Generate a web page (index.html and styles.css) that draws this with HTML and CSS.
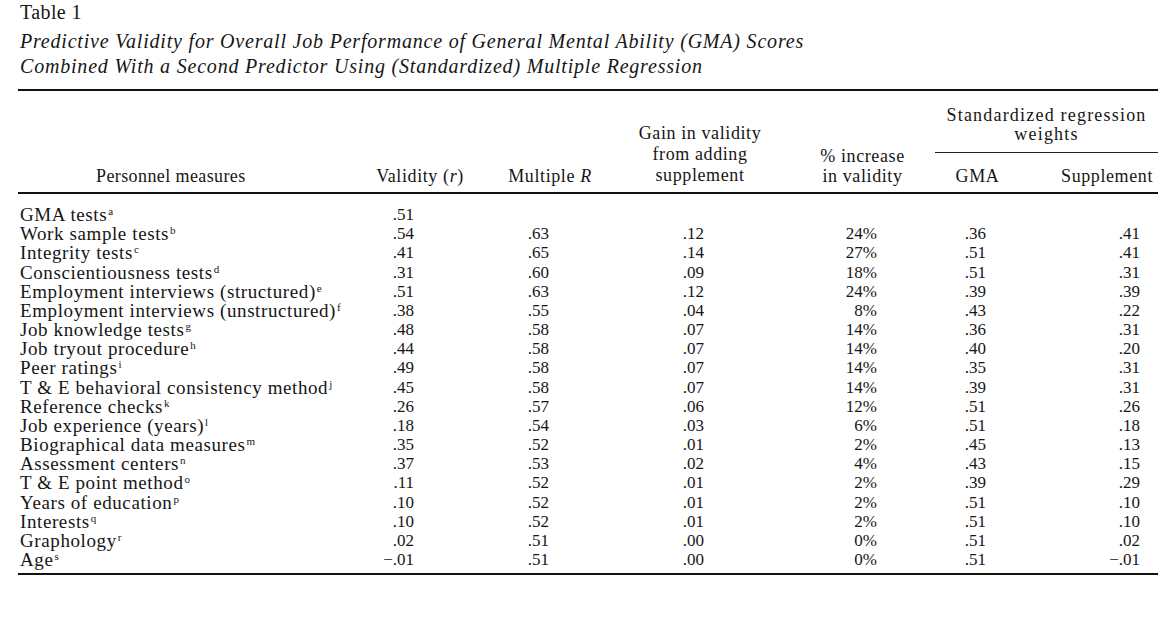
FILE: index.html
```html
<!DOCTYPE html>
<html lang="en">
<head>
<meta charset="utf-8">
<title>Table 1</title>
<link rel="stylesheet" href="styles.css">
</head>
<body>
<div class="page">
  <div class="caption">
    <div class="label">Table 1</div>
    <div class="title first">Predictive Validity for Overall Job Performance of General Mental Ability (GMA) Scores</div>
    <div class="title">Combined With a Second Predictor Using (Standardized) Multiple Regression</div>
  </div>
  <table class="data">
    <colgroup>
      <col class="c-name">
      <col class="c-val">
      <col class="c-mult">
      <col class="c-gain">
      <col class="c-pct">
      <col class="c-gma">
      <col class="c-sup">
    </colgroup>
    <thead>
      <tr class="h1">
        <th rowspan="2" class="h-name">Personnel measures</th>
        <th rowspan="2" class="h-low">Validity (<i>r</i>)</th>
        <th rowspan="2" class="h-low">Multiple <i>R</i></th>
        <th rowspan="2" class="h-low h-gain">Gain in validity<br>from adding<br>supplement</th>
        <th rowspan="2" class="h-low">% increase<br>in validity</th>
        <th colspan="2" class="h-span">Standardized regression<br>weights</th>
      </tr>
      <tr class="h2">
        <th class="h-gma">GMA</th>
        <th class="h-sup">Supplement</th>
      </tr>
    </thead>
    <tbody>
      <tr><td class="name">GMA tests<sup>a</sup></td><td>.51</td><td></td><td></td><td></td><td></td><td></td></tr>
      <tr><td class="name">Work sample tests<sup>b</sup></td><td>.54</td><td>.63</td><td>.12</td><td>24%</td><td>.36</td><td>.41</td></tr>
      <tr><td class="name">Integrity tests<sup>c</sup></td><td>.41</td><td>.65</td><td>.14</td><td>27%</td><td>.51</td><td>.41</td></tr>
      <tr><td class="name">Conscientiousness tests<sup>d</sup></td><td>.31</td><td>.60</td><td>.09</td><td>18%</td><td>.51</td><td>.31</td></tr>
      <tr><td class="name">Employment interviews (structured)<sup>e</sup></td><td>.51</td><td>.63</td><td>.12</td><td>24%</td><td>.39</td><td>.39</td></tr>
      <tr><td class="name">Employment interviews (unstructured)<sup>f</sup></td><td>.38</td><td>.55</td><td>.04</td><td>8%</td><td>.43</td><td>.22</td></tr>
      <tr><td class="name">Job knowledge tests<sup>g</sup></td><td>.48</td><td>.58</td><td>.07</td><td>14%</td><td>.36</td><td>.31</td></tr>
      <tr><td class="name">Job tryout procedure<sup>h</sup></td><td>.44</td><td>.58</td><td>.07</td><td>14%</td><td>.40</td><td>.20</td></tr>
      <tr><td class="name">Peer ratings<sup>i</sup></td><td>.49</td><td>.58</td><td>.07</td><td>14%</td><td>.35</td><td>.31</td></tr>
      <tr><td class="name">T &amp; E behavioral consistency method<sup>j</sup></td><td>.45</td><td>.58</td><td>.07</td><td>14%</td><td>.39</td><td>.31</td></tr>
      <tr><td class="name">Reference checks<sup>k</sup></td><td>.26</td><td>.57</td><td>.06</td><td>12%</td><td>.51</td><td>.26</td></tr>
      <tr><td class="name">Job experience (years)<sup>l</sup></td><td>.18</td><td>.54</td><td>.03</td><td>6%</td><td>.51</td><td>.18</td></tr>
      <tr><td class="name">Biographical data measures<sup>m</sup></td><td>.35</td><td>.52</td><td>.01</td><td>2%</td><td>.45</td><td>.13</td></tr>
      <tr><td class="name">Assessment centers<sup>n</sup></td><td>.37</td><td>.53</td><td>.02</td><td>4%</td><td>.43</td><td>.15</td></tr>
      <tr><td class="name">T &amp; E point method<sup>o</sup></td><td>.11</td><td>.52</td><td>.01</td><td>2%</td><td>.39</td><td>.29</td></tr>
      <tr><td class="name">Years of education<sup>p</sup></td><td>.10</td><td>.52</td><td>.01</td><td>2%</td><td>.51</td><td>.10</td></tr>
      <tr><td class="name">Interests<sup>q</sup></td><td>.10</td><td>.52</td><td>.01</td><td>2%</td><td>.51</td><td>.10</td></tr>
      <tr><td class="name">Graphology<sup>r</sup></td><td>.02</td><td>.51</td><td>.00</td><td>0%</td><td>.51</td><td>.02</td></tr>
      <tr><td class="name">Age<sup>s</sup></td><td>&minus;.01</td><td>.51</td><td>.00</td><td>0%</td><td>.51</td><td>&minus;.01</td></tr>
    </tbody>
  </table>
</div>
</body>
</html>
```

FILE: styles.css
```css
html, body {
  margin: 0;
  padding: 0;
  background: #ffffff;
}

body {
  font-family: "Liberation Serif", "Times New Roman", serif;
  color: #161616;
}

.page {
  padding: 1px 14px 0 18px;
}

.caption {
  padding-left: 2px;
}

.label {
  font-size: 20px;
  line-height: 22px;
  letter-spacing: 0.4px;
}

.title {
  font-style: italic;
  font-size: 20px;
  line-height: 25px;
  letter-spacing: 0.8px;
}

.title.first {
  margin-top: 6px;
}

.data {
  margin-top: 10px;
  width: 1140px;
  table-layout: fixed;
  border-collapse: collapse;
  border-top: 2px solid #111;
  border-bottom: 2px solid #111;
  font-size: 18px;
}

.c-name { width: 332px; }
.c-val  { width: 140px; }
.c-mult { width: 120px; }
.c-gain { width: 180px; }
.c-pct  { width: 145px; }
.c-gma  { width: 85px; }
.c-sup  { width: 138px; }

thead {
  border-bottom: 2px solid #111;
}

th {
  font-weight: normal;
  letter-spacing: 0.6px;
  padding: 0;
  white-space: nowrap;
}

.h-name,
.h-low {
  vertical-align: bottom;
  text-align: center;
  line-height: 20px;
  padding-bottom: 6px;
}

.h-gain {
  line-height: 21px;
}

.h-name {
  text-align: left;
  padding-left: 78px;
  letter-spacing: 0.4px;
}

.h-span {
  text-align: center;
  line-height: 19px;
  padding: 15px 0 8px;
  border-bottom: 1px solid #222;
  vertical-align: top;
  letter-spacing: 1.2px;
}

.h2 th {
  line-height: 20px;
  padding: 13px 0 6px;
  vertical-align: bottom;
}

.h-gma {
  text-align: center;
}

.h-sup {
  text-align: right;
  padding-right: 5px !important;
}

td {
  padding: 0;
  height: 19.17px;
  line-height: 19.17px;
  text-align: right;
  white-space: nowrap;
  font-size: 17px;
}

td.name {
  text-align: left;
  padding-left: 2px;
  font-size: 19px;
  letter-spacing: 0.6px;
}

tbody tr:first-child td {
  padding-top: 11px;
}

tbody tr:last-child td {
  padding-bottom: 4px;
}

td:nth-child(2) { padding-right: 76px; }
td:nth-child(3) { padding-right: 61px; }
td:nth-child(4) { padding-right: 86px; }
td:nth-child(5) { padding-right: 58px; }
td:nth-child(6) { padding-right: 34px; }
td:nth-child(7) { padding-right: 18px; }

sup {
  font-size: 11px;
  line-height: 0;
  vertical-align: 6px;
  letter-spacing: 0;
  margin-left: 1px;
}
```
